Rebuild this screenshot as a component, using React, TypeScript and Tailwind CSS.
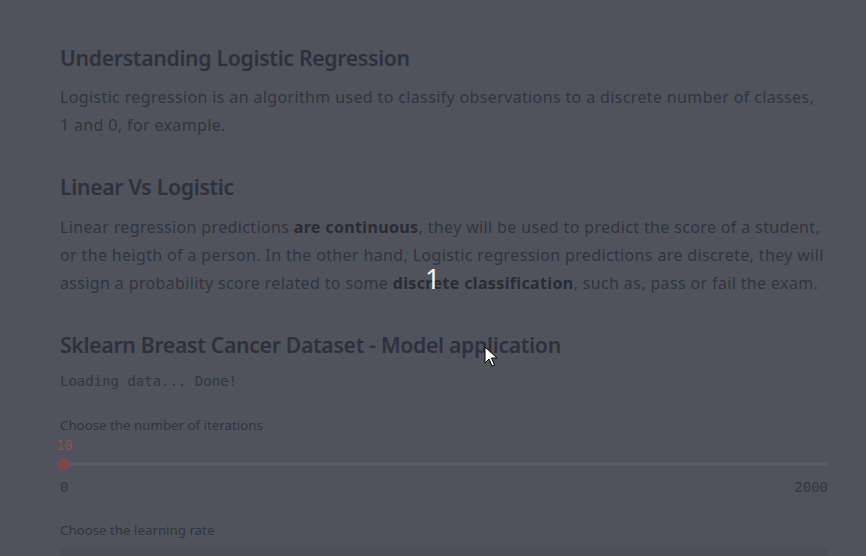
import React from 'react';

const sans = { fontFamily: '"Noto Sans", "Open Sans", sans-serif' };

const App: React.FC = () => {
  return (
    <div className="relative h-[556px] w-[866px] overflow-hidden bg-[#50535b] text-[#2f303b]" style={sans}>
      <div className="w-[828px] pl-[60px] pt-[44px]">
        <h2 className="text-[21.2px] leading-[28px] font-semibold tracking-[-0.3px]">Understanding Logistic Regression</h2>
        <p className="mt-[11px] text-[16px] leading-[28px] tracking-[0.36px] text-[#33343f]">
          Logistic regression is an algorithm used to classify observations to a discrete number of classes, 1 and 0, for example.
        </p>

        <h2 className="mt-[34px] text-[21.2px] leading-[28px] font-semibold tracking-[-0.3px]">Linear Vs Logistic</h2>
        <p className="mt-[12px] text-[16px] leading-[28px] tracking-[0.36px] text-[#33343f]">
          Linear regression predictions <b className="font-bold text-[#2a2b35]">are continuous</b>, they will be used to predict the score of a student, or the heigth of a person. In the other hand, Logistic regression predictions are discrete, they will assign a probability score related to some{' '}
          <b className="font-bold text-[#2a2b35]">discrete classification</b>, such as, pass or fail the exam.
        </p>

        <h2 className="mt-[34px] text-[21.2px] leading-[28px] font-semibold tracking-[-0.3px]">Sklearn Breast Cancer Dataset - Model application</h2>
        <div className="mt-[12px] font-['DejaVu_Sans_Mono',monospace] text-[14px] leading-[20px] text-[#35363f]">Loading data... Done!</div>

        <label className="mt-[24px] block text-[13.3px] leading-[20px] text-[#33343f]">Choose the number of iterations</label>
        <div className="mt-[2px]">
          <div className="ml-[-4px] font-['DejaVu_Sans_Mono',monospace] text-[14px] leading-[16px] text-[#83525a]">10</div>
          <div className="mt-[3px] flex h-[16px] items-center">
            <div className="ml-[-3px] h-[13px] w-[13px] shrink-0 rounded-full bg-[#7a4950]" />
            <div className="ml-[-1px] h-[4px] flex-1 rounded-r-full bg-[#595b62]" />
          </div>
          <div className="mt-[7px] flex justify-between font-['DejaVu_Sans_Mono',monospace] text-[14px] leading-[16px] text-[#35363f]">
            <span>0</span>
            <span>2000</span>
          </div>
        </div>

        <label className="mt-[25px] block text-[13.3px] leading-[20px] text-[#33343f]">Choose the learning rate</label>
        <div className="mt-[7px] h-[20px] w-full bg-[#4c4f57]" />
      </div>

      <span className="pointer-events-none absolute left-[425px] top-[264px] text-[27px] leading-[30px] font-normal text-[#f4f4f6]">1</span>

      <svg className="absolute left-[484px] top-[346px]" width="14" height="22" viewBox="0 0 14 22">
        <path d="M1 1 L1 17 L5 13 L8 20 L10.5 19 L7.5 12 L13 12 Z" fill="#fff" stroke="#000" strokeWidth="1" strokeLinejoin="round" />
      </svg>
    </div>
  );
};

export default App;
